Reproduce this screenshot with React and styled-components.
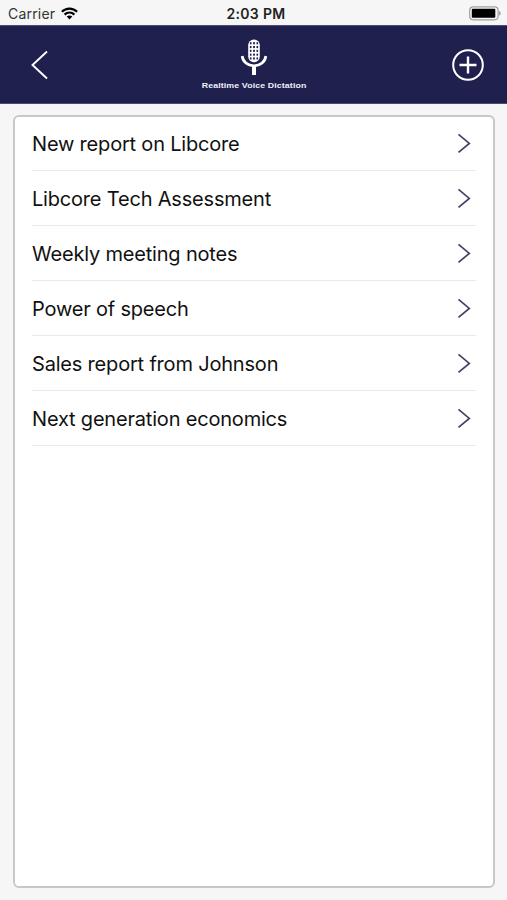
import React from 'react'
import styled, { createGlobalStyle } from 'styled-components'

const GlobalStyle = createGlobalStyle`
  * {
    box-sizing: border-box;
  }

  body {
    margin: 0;
    background: #f6f6f6;
    font-family: Inter, 'Liberation Sans', sans-serif;
  }
`

const Screen = styled.div`
  display: flex;
  flex-direction: column;
  height: 900px;
  background: #f6f6f6;
`

const StatusBar = styled.div`
  display: grid;
  grid-template-columns: 1fr auto 1fr;
  align-items: center;
  height: 25px;
  padding: 2px 6px 0 8px;
  color: #222;
`

const Carrier = styled.div`
  display: flex;
  align-items: center;
  gap: 6px;
  font-size: 14px;
  letter-spacing: 0.2px;
  color: #333;
`

const Time = styled.div`
  font-size: 14px;
  font-weight: 600;
  letter-spacing: 0.35px;
  margin-left: 3px;
`

const Battery = styled.svg`
  justify-self: end;
`

const Header = styled.header`
  display: grid;
  grid-template-columns: 1fr auto 1fr;
  align-items: center;
  height: 79px;
  padding: 0 22px 0 30px;
  background: #20204e;
  border-top: 1px solid #4c4c70;
  border-bottom: 1px solid #4c4c70;
`

const IconButton = styled.button`
  display: flex;
  padding: 0;
  border: 0;
  background: none;
  justify-self: ${props => props.$side};
`

const Brand = styled.div`
  display: flex;
  flex-direction: column;
  align-items: center;
  gap: 5px;
  width: 106px;
  margin-left: -8px;
`

const BrandName = styled.div`
  font-family: 'Liberation Sans', Arial, sans-serif;
  font-size: 8px;
  line-height: 10px;
  font-weight: 700;
  letter-spacing: 0.1px;
  white-space: nowrap;
  color: #f0f0f8;
  transform: translateX(0.5px) scaleX(1.1);
`

const Card = styled.ul`
  flex: 1;
  margin: 11px 12px 12px 13px;
  padding: 0 17px;
  list-style: none;
  background: #fff;
  border: 2px solid #c8c8c8;
  border-radius: 6px;
`

const Row = styled.li`
  display: flex;
  align-items: center;
  justify-content: space-between;
  height: 55px;
  padding: 1px 5px 0 0;
  border-bottom: 1px solid #e9e9e9;

  &:first-child {
    height: 54px;
    padding-top: 0;
  }
`

const Title = styled.span`
  font-size: 20px;
  line-height: 24px;
  letter-spacing: -0.19px;
  color: #111;
`

const notes = [
  'New report on Libcore',
  'Libcore Tech Assessment',
  'Weekly meeting notes',
  'Power of speech',
  'Sales report from Johnson',
  'Next generation economics',
]

const WifiIcon = () => (
  <svg width="17" height="13" viewBox="0 0 17 13">
    <g fill="none" stroke="#000" strokeWidth="2.2">
      <path d="M0.9 4.8 C5.1 0.5 11.9 0.5 16.1 4.8" />
      <path d="M3.6 7.6 C6.4 4.8 10.6 4.8 13.4 7.6" />
    </g>
    <path d="M5.7 9.6 C7.3 8.1 9.7 8.1 11.3 9.6 L8.5 12.5 Z" fill="#000" />
  </svg>
)

const BatteryIcon = () => (
  <Battery width="32" height="15" viewBox="0 0 32 15">
    <rect x="0.7" y="0.8" width="28.4" height="13" rx="3.5" fill="#f6f6f6" stroke="#a0a0a0" strokeWidth="1.2" />
    <rect x="2.8" y="2.8" width="23.5" height="9" rx="1" fill="#000" />
    <path d="M30.2 5 C32 5.6 32 9 30.2 9.6 Z" fill="#888" />
  </Battery>
)

const MicIcon = () => (
  <svg width="28" height="37" viewBox="0 0 28 37">
    <rect x="8.2" y="0.6" width="11.6" height="22.6" rx="5.6" fill="#fff" />
    <g fill="#20204e">
      {[3.2, 7, 10.8, 14.6, 18.4].map(y => (
        <React.Fragment key={y}>
          <rect x="9.9" y={y} width="1.6" height="2.1" />
          <rect x="13.1" y={y} width="1.8" height="2.1" />
          <rect x="16.5" y={y} width="1.6" height="2.1" />
        </React.Fragment>
      ))}
    </g>
    <path d="M2.2 17 C2.8 22.8 7.6 26.8 14 26.8 C20.4 26.8 25.2 22.8 25.8 17" fill="none" stroke="#fff" strokeWidth="2.7" />
    <path d="M14 26V36" stroke="#fff" strokeWidth="4" />
  </svg>
)

const Chevron = () => (
  <svg width="14" height="21" viewBox="0 0 14 21">
    <path d="M1.5 1.4 L12.3 10.4 L1.5 19.4" fill="none" stroke="#444066" strokeWidth="1.7" />
  </svg>
)

const App = () => (
  <>
    <GlobalStyle />
    <Screen>
      <StatusBar>
        <Carrier>
          Carrier
          <WifiIcon />
        </Carrier>
        <Time>2:03 PM</Time>
        <BatteryIcon />
      </StatusBar>
      <Header>
        <IconButton $side="start" aria-label="Back">
          <svg width="18" height="30" viewBox="0 0 18 30">
            <path d="M17 1.5 L2.5 15 L17 28.5" fill="none" stroke="#fff" strokeWidth="1.9" />
          </svg>
        </IconButton>
        <Brand>
          <MicIcon />
          <BrandName>Realtime Voice Dictation</BrandName>
        </Brand>
        <IconButton $side="end" aria-label="Add">
          <svg width="34" height="34" viewBox="0 0 34 34" fill="none" stroke="#fff">
            <circle cx="17" cy="17" r="14.8" strokeWidth="2" />
            <path d="M17 8.5V25.5 M8.5 17H25.5" strokeWidth="2.4" />
          </svg>
        </IconButton>
      </Header>
      <Card>
        {notes.map(note => (
          <Row key={note}>
            <Title>{note}</Title>
            <Chevron />
          </Row>
        ))}
      </Card>
    </Screen>
  </>
)

export default App
